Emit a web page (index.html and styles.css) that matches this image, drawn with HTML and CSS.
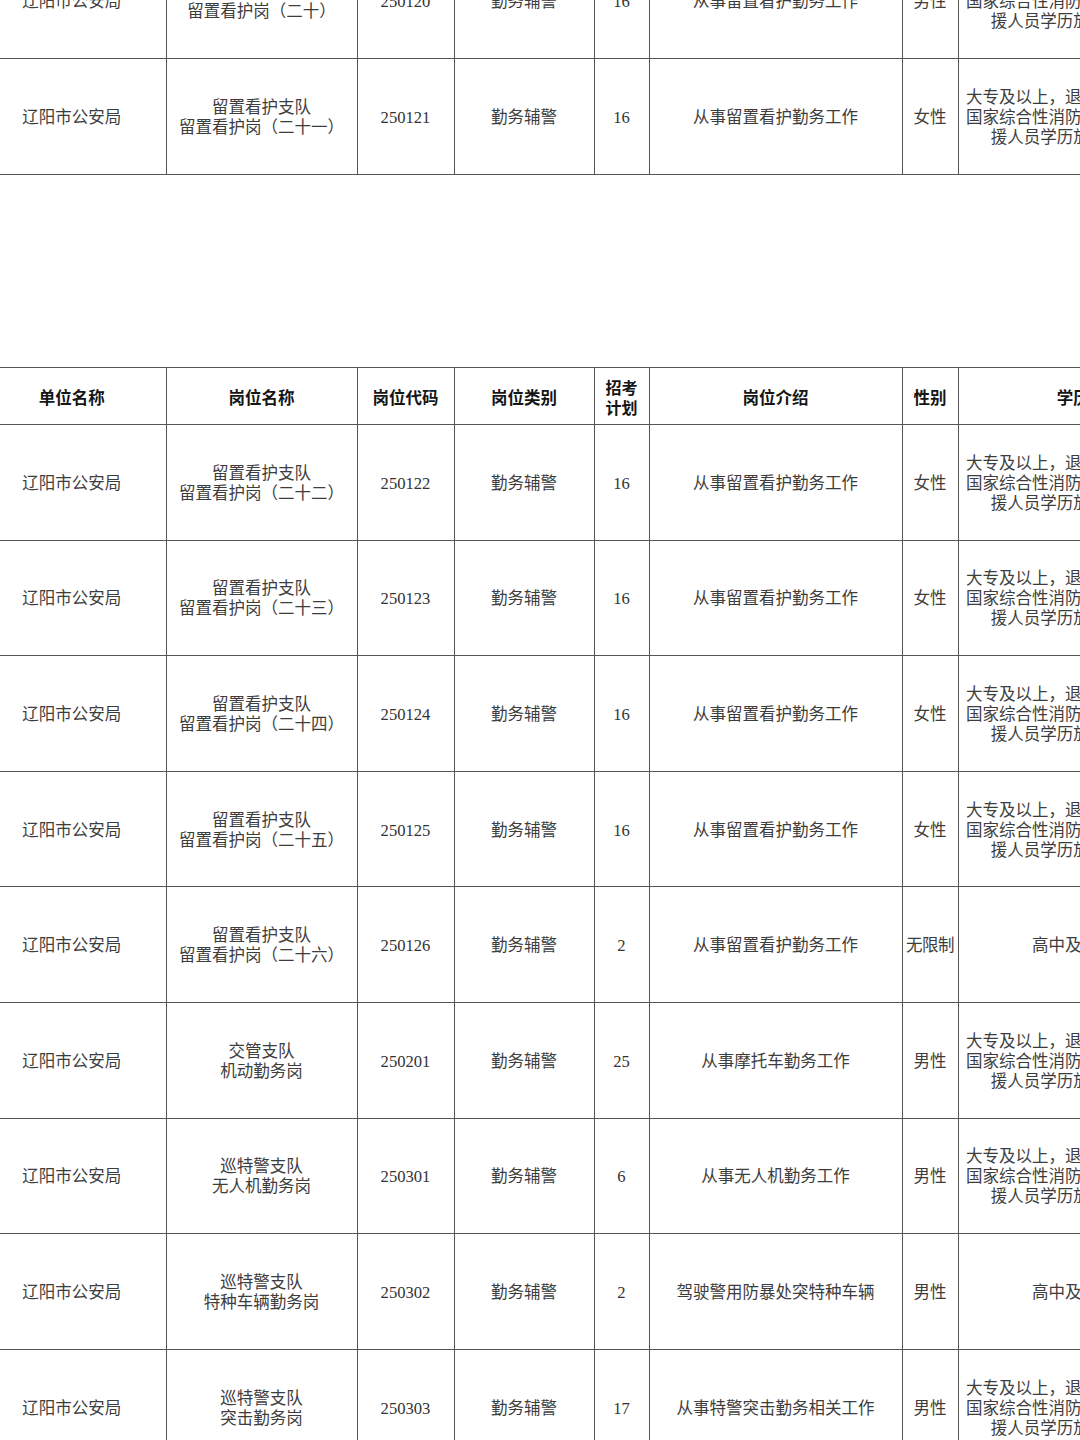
FILE: index.html
```html
<!DOCTYPE html>
<html lang="zh-CN">
<head>
<meta charset="utf-8">
<title>辽阳市公安局 勤务辅警岗位表</title>
<link rel="stylesheet" href="styles.css">
</head>
<body>
<main class="page">
  <section class="sheet sheet-top">
    <table class="grid">
      <colgroup>
        <col class="c-unit"><col class="c-post"><col class="c-code"><col class="c-type"><col class="c-plan"><col class="c-desc"><col class="c-sex"><col class="c-edu">
      </colgroup>
      <tbody>
        <tr>
          <td>辽阳市公安局</td>
          <td>留置看护支队<br>留置看护岗（二十）</td>
          <td class="num">250120</td>
          <td>勤务辅警</td>
          <td class="num">16</td>
          <td>从事留置看护勤务工作</td>
          <td>男性</td>
          <td class="edu">大专及以上，退役军人、退出<br>国家综合性消防队伍的消防救<br>援人员学历放宽至高中</td>
        </tr>
        <tr>
          <td>辽阳市公安局</td>
          <td>留置看护支队<br>留置看护岗（二十一）</td>
          <td class="num">250121</td>
          <td>勤务辅警</td>
          <td class="num">16</td>
          <td>从事留置看护勤务工作</td>
          <td>女性</td>
          <td class="edu">大专及以上，退役军人、退出<br>国家综合性消防队伍的消防救<br>援人员学历放宽至高中</td>
        </tr>
      </tbody>
    </table>
  </section>

  <section class="sheet sheet-main">
    <table class="grid">
      <colgroup>
        <col class="c-unit"><col class="c-post"><col class="c-code"><col class="c-type"><col class="c-plan"><col class="c-desc"><col class="c-sex"><col class="c-edu">
      </colgroup>
      <thead>
        <tr class="head">
          <th>单位名称</th>
          <th>岗位名称</th>
          <th>岗位代码</th>
          <th>岗位类别</th>
          <th class="plan">招考<br>计划</th>
          <th>岗位介绍</th>
          <th>性别</th>
          <th>学历</th>
        </tr>
      </thead>
      <tbody>
        <tr>
          <td>辽阳市公安局</td>
          <td>留置看护支队<br>留置看护岗（二十二）</td>
          <td class="num">250122</td>
          <td>勤务辅警</td>
          <td class="num">16</td>
          <td>从事留置看护勤务工作</td>
          <td>女性</td>
          <td class="edu">大专及以上，退役军人、退出<br>国家综合性消防队伍的消防救<br>援人员学历放宽至高中</td>
        </tr>
        <tr>
          <td>辽阳市公安局</td>
          <td>留置看护支队<br>留置看护岗（二十三）</td>
          <td class="num">250123</td>
          <td>勤务辅警</td>
          <td class="num">16</td>
          <td>从事留置看护勤务工作</td>
          <td>女性</td>
          <td class="edu">大专及以上，退役军人、退出<br>国家综合性消防队伍的消防救<br>援人员学历放宽至高中</td>
        </tr>
        <tr>
          <td>辽阳市公安局</td>
          <td>留置看护支队<br>留置看护岗（二十四）</td>
          <td class="num">250124</td>
          <td>勤务辅警</td>
          <td class="num">16</td>
          <td>从事留置看护勤务工作</td>
          <td>女性</td>
          <td class="edu">大专及以上，退役军人、退出<br>国家综合性消防队伍的消防救<br>援人员学历放宽至高中</td>
        </tr>
        <tr>
          <td>辽阳市公安局</td>
          <td>留置看护支队<br>留置看护岗（二十五）</td>
          <td class="num">250125</td>
          <td>勤务辅警</td>
          <td class="num">16</td>
          <td>从事留置看护勤务工作</td>
          <td>女性</td>
          <td class="edu">大专及以上，退役军人、退出<br>国家综合性消防队伍的消防救<br>援人员学历放宽至高中</td>
        </tr>
        <tr>
          <td>辽阳市公安局</td>
          <td>留置看护支队<br>留置看护岗（二十六）</td>
          <td class="num">250126</td>
          <td>勤务辅警</td>
          <td class="num">2</td>
          <td>从事留置看护勤务工作</td>
          <td class="tight">无限制</td>
          <td>高中及以上</td>
        </tr>
        <tr>
          <td>辽阳市公安局</td>
          <td>交管支队<br>机动勤务岗</td>
          <td class="num">250201</td>
          <td>勤务辅警</td>
          <td class="num">25</td>
          <td>从事摩托车勤务工作</td>
          <td>男性</td>
          <td class="edu">大专及以上，退役军人、退出<br>国家综合性消防队伍的消防救<br>援人员学历放宽至高中</td>
        </tr>
        <tr>
          <td>辽阳市公安局</td>
          <td>巡特警支队<br>无人机勤务岗</td>
          <td class="num">250301</td>
          <td>勤务辅警</td>
          <td class="num">6</td>
          <td>从事无人机勤务工作</td>
          <td>男性</td>
          <td class="edu">大专及以上，退役军人、退出<br>国家综合性消防队伍的消防救<br>援人员学历放宽至高中</td>
        </tr>
        <tr>
          <td>辽阳市公安局</td>
          <td>巡特警支队<br>特种车辆勤务岗</td>
          <td class="num">250302</td>
          <td>勤务辅警</td>
          <td class="num">2</td>
          <td>驾驶警用防暴处突特种车辆</td>
          <td>男性</td>
          <td>高中及以上</td>
        </tr>
        <tr>
          <td>辽阳市公安局</td>
          <td>巡特警支队<br>突击勤务岗</td>
          <td class="num">250303</td>
          <td>勤务辅警</td>
          <td class="num">17</td>
          <td>从事特警突击勤务相关工作</td>
          <td>男性</td>
          <td class="edu">大专及以上，退役军人、退出<br>国家综合性消防队伍的消防救<br>援人员学历放宽至高中</td>
        </tr>
      </tbody>
    </table>
  </section>
</main>
</body>
</html>
```

FILE: styles.css
```css
html, body {
  margin: 0;
  padding: 0;
  background: #ffffff;
  overflow: hidden;
}

.page {
  width: 1080px;
  height: 1440px;
  overflow: hidden;
}

.sheet {
  width: 1210px;
  margin-left: -22px;
}

.sheet-top {
  margin-top: -58px;
}

.sheet-main {
  margin-top: 192px;
}

.grid {
  width: 1210px;
  table-layout: fixed;
  border-collapse: collapse;
  font-family: "Liberation Serif", "Noto Sans CJK SC", serif;
  font-size: 16.5px;
  line-height: 20px;
  color: #3d3d3d;
}

.c-unit { width: 188px; }
.c-post { width: 191px; }
.c-code { width: 97px; }
.c-type { width: 140px; }
.c-plan { width: 55px; }
.c-desc { width: 253px; }
.c-sex  { width: 56px; }
.c-edu  { width: 230px; }

.grid td,
.grid th {
  border: 1.5px solid #555555;
  padding: 3px 0 0;
  text-align: center;
  vertical-align: middle;
  white-space: nowrap;
  overflow: hidden;
}

.grid td:first-child,
.grid th:first-child {
  border-left: none;
}

.grid td:last-child,
.grid th:last-child {
  border-right: none;
}

.sheet-top tr {
  height: 116px;
}

.sheet-main tbody tr {
  height: 115.6px;
}

.sheet-main .head {
  height: 57px;
}

.grid th {
  font-family: "Noto Sans CJK SC", sans-serif;
  font-weight: 700;
  color: #151515;
  line-height: 20px;
  padding-top: 1px;
}

.grid th.plan {
  line-height: 20px;
  font-size: 16px;
}

.grid .num {
  font-size: 16.6px;
  color: #333333;
}

.grid .tight {
  letter-spacing: -0.5px;
}

.grid .edu {
  text-align: center;
}
```
